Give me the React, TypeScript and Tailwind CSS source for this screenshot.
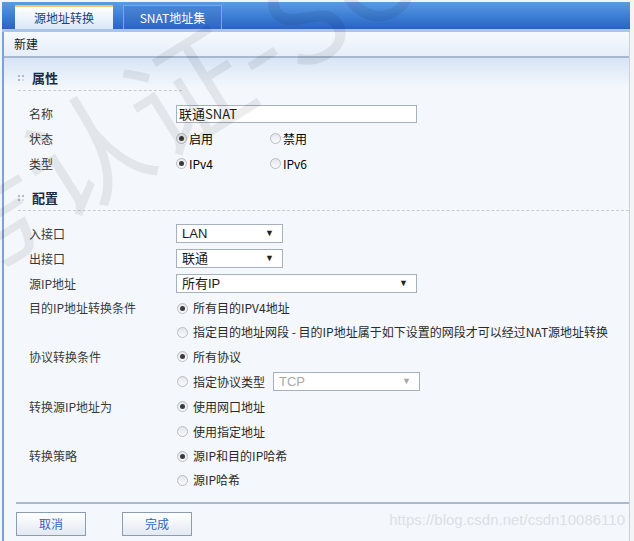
import React from "react";

const font = { fontFamily: '"Noto Sans CJK SC", "Noto Sans", sans-serif' };

function Radio({ checked }: { checked?: boolean }) {
  return (
    <span className="relative inline-flex h-[11px] w-[11px] shrink-0 items-center justify-center rounded-full border border-[#b8bcc4] bg-gradient-to-b from-[#e4e6ea] to-[#fbfbfc]">
      {checked && <span className="h-[5px] w-[5px] rounded-full bg-[#3a3a3a]" />}
    </span>
  );
}

function Select({ value, width, muted }: { value: string; width: string; muted?: boolean }) {
  return (
    <div
      className={`flex h-[19px] items-center justify-between border border-[#a6b1c0] bg-white pl-[5px] pr-[8px] text-[13px] ${width} ${
        muted ? "text-[#a8a8a8]" : "text-[#1a1a1a]"
      }`}
      style={{ fontFamily: '"Liberation Sans", "Noto Sans CJK SC", sans-serif' }}
    >
      <span>{value}</span>
      <span className={`text-[9px] ${muted ? "text-[#a8a8a8]" : "text-[#222]"}`}>▼</span>
    </div>
  );
}

function Section({ title, full }: { title: string; full?: boolean }) {
  return (
    <div className="pl-[14px]">
      <div className="flex h-[24px] items-center gap-[8px]">
        <span className="grid grid-cols-2 gap-[2px] opacity-60">
          <span className="h-[2px] w-[2px] bg-[#8a94a6]" />
          <span className="h-[2px] w-[2px] bg-[#8a94a6]" />
          <span className="h-[2px] w-[2px] bg-[#8a94a6]" />
          <span className="h-[2px] w-[2px] bg-[#c4cad4]" />
        </span>
        <span className="text-[13px] font-bold text-[#1d2a44]">{title}</span>
      </div>
      <div className={`border-t border-dashed border-[#c9ced6] ${full ? "w-full" : "w-[164px]"}`} />
    </div>
  );
}

function Row({ label, children, h = "h-[25px]" }: { label?: string; children: React.ReactNode; h?: string }) {
  return (
    <div className={`flex items-center ${h}`}>
      <div className="w-[147px] shrink-0 text-[12px] text-[#3a3a3a]">{label}</div>
      <div className="flex items-center">{children}</div>
    </div>
  );
}

function Opt({ checked, text }: { checked?: boolean; text: string }) {
  return (
    <div className="flex items-center gap-[5px] pl-[1px] text-[12px] text-[#2a2a2a]">
      <Radio checked={checked} />
      <span>{text}</span>
    </div>
  );
}

export default function App() {
  return (
    <div className="relative h-[541px] w-[634px] overflow-hidden bg-[#f4f4f4]" style={font}>
      {/* tab bar */}
      <div className="ml-[2px] mr-[4px] mt-[2px] h-[30px] border-b-[3px] border-[#a9c6ea] bg-gradient-to-b from-[#5c9be0] via-[#3d7fd6] to-[#2a63bf]">
        <div className="flex items-end gap-[10px] pl-[13px] pt-[3px]">
          <div className="flex h-[24px] w-[98px] items-center justify-center border-t-2 border-[#f5c36a] bg-gradient-to-b from-[#ffffff] to-[#d9e7f7] text-[12px] text-[#1f3d78]">
            源地址转换
          </div>
          <div className="flex h-[24px] w-[99px] items-center justify-center border border-b-0 border-[#7ea7de] bg-gradient-to-b from-[#4a86d6] to-[#2d66c0] text-[12px] text-white">
            SNAT地址集
          </div>
        </div>
      </div>

      {/* panel */}
      <div className="ml-[2px] mr-[4px] h-[509px] border-l-2 border-r border-[#7ba2d8] border-r-[#c8d2de] bg-[#f4f8fc]">
        <div className="flex h-[26px] items-center border-b-2 border-[#a9b8ce] bg-gradient-to-b from-[#f6f9fe] to-[#e6eef9] pl-[10px] text-[12px] text-[#1a1a1a]">
          新建
        </div>
        <div className="bg-gradient-to-b from-[#d7e4f6] to-[#f4f8fc] to-[30px]">
          <div className="pt-[8px]">
            <Section title="属性" />
          </div>
          <div className="pl-[25px] pt-[10px]">
            <Row label="名称">
              <div className="flex h-[18px] w-[241px] items-center border border-[#a6b1c0] bg-white pl-[2px] text-[13px] text-[#1a1a1a]">
                联通SNAT
              </div>
            </Row>
            <Row label="状态">
              <div className="flex w-[94px] items-center gap-[2px] text-[12px]">
                <Radio checked />
                <span>启用</span>
              </div>
              <div className="flex items-center gap-[2px] text-[12px]">
                <Radio />
                <span>禁用</span>
              </div>
            </Row>
            <Row label="类型">
              <div className="flex w-[94px] items-center gap-[2px] text-[12px]">
                <Radio checked />
                <span>IPv4</span>
              </div>
              <div className="flex items-center gap-[2px] text-[12px]">
                <Radio />
                <span>IPv6</span>
              </div>
            </Row>
          </div>
        </div>

        <div className="pt-[10px]">
          <Section title="配置" full />
        </div>

        <div className="pl-[25px] pt-[10px]">
          <Row label="入接口">
            <Select value="LAN" width="w-[107px]" />
          </Row>
          <Row label="出接口">
            <Select value="联通" width="w-[107px]" />
          </Row>
          <Row label="源IP地址">
            <Select value="所有IP" width="w-[241px]" />
          </Row>
          <Row label="目的IP地址转换条件" h="h-[24px]">
            <Opt checked text="所有目的IPV4地址" />
          </Row>
          <Row h="h-[24px]">
            <Opt text="指定目的地址网段 - 目的IP地址属于如下设置的网段才可以经过NAT源地址转换" />
          </Row>
          <Row label="协议转换条件" h="h-[25px]">
            <Opt checked text="所有协议" />
          </Row>
          <Row h="h-[25px]">
            <Opt text="指定协议类型" />
            <div className="ml-[8px]">
              <Select value="TCP" width="w-[147px]" muted />
            </div>
          </Row>
          <Row label="转换源IP地址为" h="h-[25px]">
            <Opt checked text="使用网口地址" />
          </Row>
          <Row h="h-[25px]">
            <Opt text="使用指定地址" />
          </Row>
          <Row label="转换策略" h="h-[24px]">
            <Opt checked text="源IP和目的IP哈希" />
          </Row>
          <Row h="h-[24px]">
            <Opt text="源IP哈希" />
          </Row>
        </div>

        <div className="ml-[12px] mt-[10px] border-t-2 border-[#a9b9cf]" />
        <div className="flex items-center gap-[36px] pl-[12px] pt-[8px]">
          <button className="h-[24px] w-[70px] border border-[#8c9cb4] bg-gradient-to-b from-[#ffffff] to-[#e3e9f2] text-[12px] text-[#3462c4]">
            取消
          </button>
          <button className="h-[24px] w-[70px] border border-[#8c9cb4] bg-gradient-to-b from-[#ffffff] to-[#e3e9f2] text-[12px] text-[#3462c4]">
            完成
          </button>
        </div>
      </div>

      {/* watermarks */}
      <div
        className="pointer-events-none absolute left-[-70px] top-[185px] origin-left -rotate-[32deg] whitespace-nowrap text-[120px] leading-none text-black/[0.07]"
        style={{ fontFamily: '"Noto Sans CJK SC", sans-serif' }}
      >
        考认证-SC
      </div>
      <div
        className="pointer-events-none absolute bottom-[10px] right-[9px] text-[15px] text-[#dcdfe4]"
        style={{ fontFamily: '"Liberation Sans", Arial, sans-serif' }}
      >
        https://blog.csdn.net/csdn10086110
      </div>
    </div>
  );
}
